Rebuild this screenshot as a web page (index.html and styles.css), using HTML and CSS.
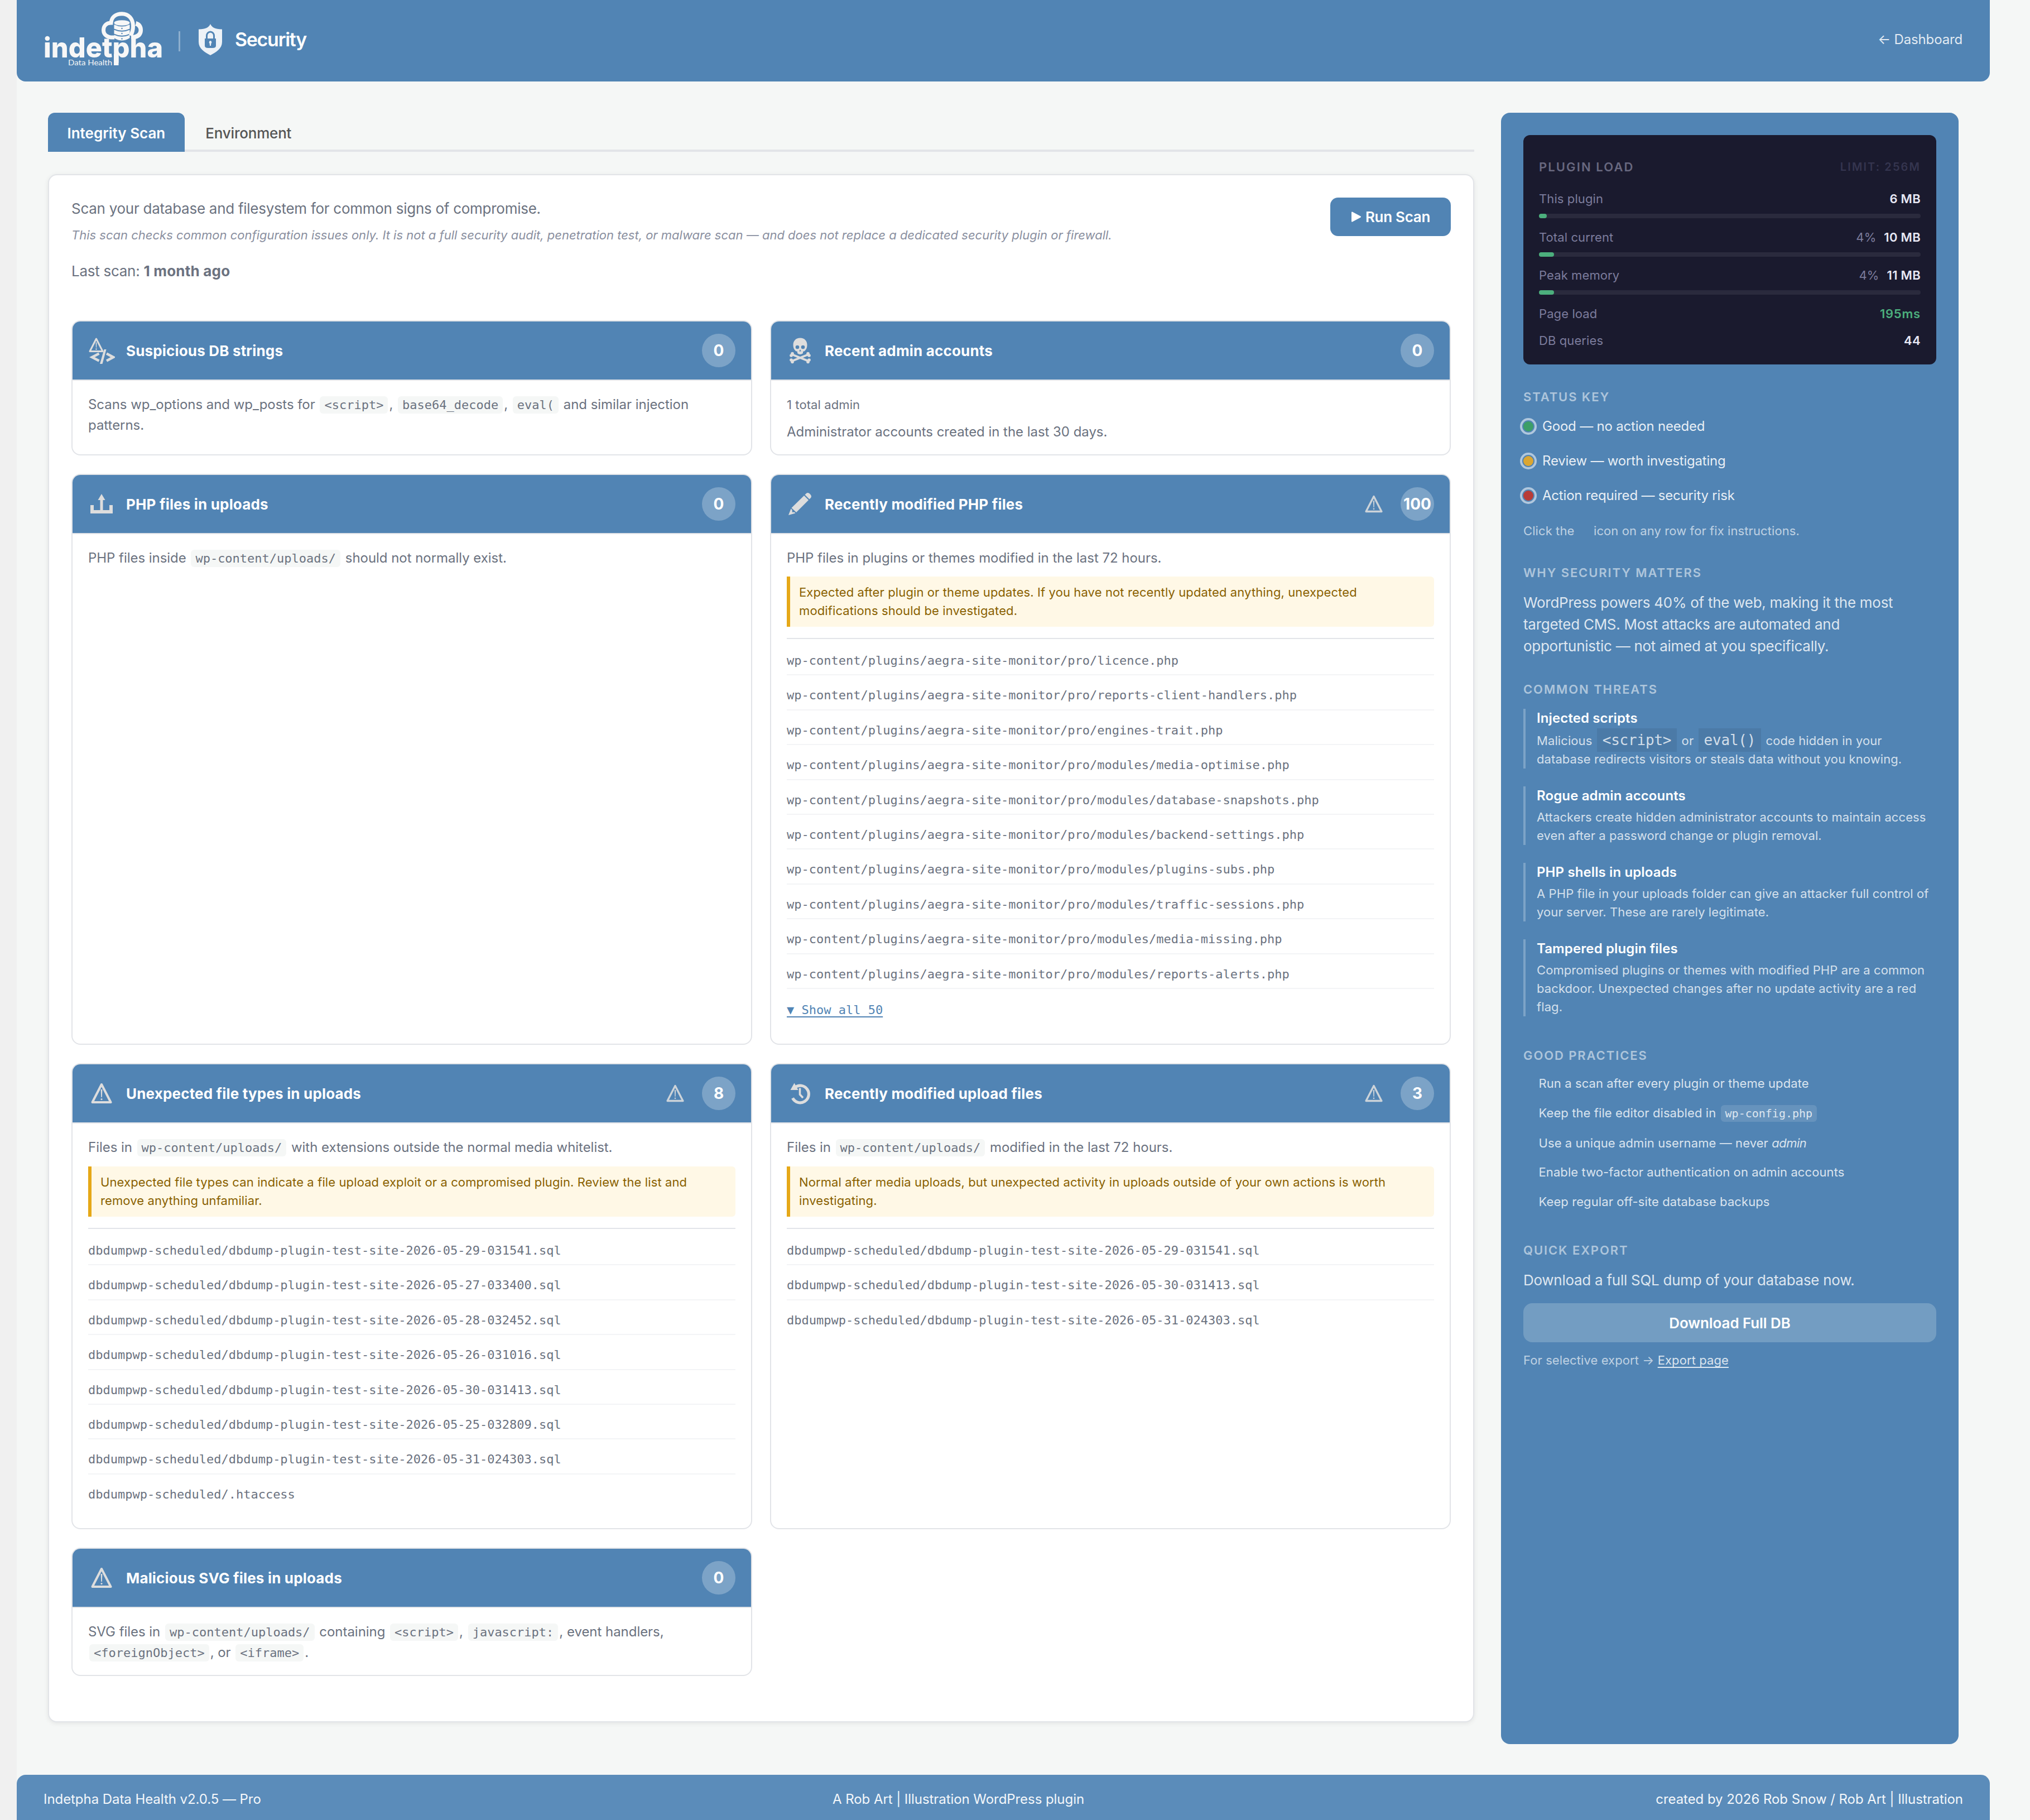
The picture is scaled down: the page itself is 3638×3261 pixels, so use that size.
FILE: index.html
```
<!DOCTYPE html>
<html lang="en">
<head>
  <meta charset="UTF-8" />
  <meta name="viewport" content="width=device-width, initial-scale=1.0"/>
  <title>Security - Indetpha Data Health</title>
  <link rel="stylesheet" href="styles.css">
</head>
<body>

<!-- shared icons -->
<svg class="sprite" width="0" height="0">
  <symbol id="icon-warning" viewBox="0 0 38 38">
    <path d="M19 3 L35.5 35 H2.5 Z" fill="none" stroke="currentColor" stroke-width="4" stroke-linejoin="round"/>
    <path d="M17.6 12 h2.8 l-.6 14 h-1.6 Z" fill="currentColor"/>
    <circle cx="19" cy="29.5" r="1.6" fill="currentColor"/>
  </symbol>
</svg>

<div class="wrap">
  <header class="topbar">
    <svg class="logo" width="216" height="100" viewBox="0 0 216 100">
      <!-- cloud -->
      <path d="M127 46 C114 47 107.500 41 107.500 33 C107.500 25 113 20 121 20 C122 9 130 3.800 140.500 3.800 C152 3.800 160.500 12 160.500 26 C160.500 34 159 38 156 43" fill="none" stroke="#f7f7f7" stroke-width="7"/>
      <path d="M166 17 C174 19 178 25 178 33 C178 42 172 49 162 49 H157 V42 C165 42 170.500 39 170.500 33 C170.500 29 168 26 164 25 C165.500 22 166 20 166 17 Z" fill="#f7f7f7"/>
      <!-- database -->
      <ellipse cx="140.500" cy="20" rx="14" ry="4.800" fill="#f7f7f7"/>
      <path d="M126.500 23 Q140.500 30 154.500 23 V30.500 Q140.500 37 126.500 30.500 Z M126.500 32.500 Q140.500 39 154.500 32.500 V39.500 Q140.500 46 126.500 39.500 Z M126.500 41.500 Q140.500 48 154.500 41.500 V47 Q140.500 56 126.500 47 Z" fill="#f7f7f7"/>
      <g fill="#5184b4"><circle cx="140.500" cy="30" r="1.200"/><circle cx="140.500" cy="39" r="1.200"/><circle cx="140.500" cy="48.500" r="1.200"/></g>
      <text class="logo-name" x="0" y="82" textLength="214" lengthAdjust="spacingAndGlyphs">indetpha</text>
      <rect x="126" y="76" width="8.500" height="20" fill="#f7f7f7"/>
      <text class="logo-sub" x="44" y="96" textLength="79" lengthAdjust="spacingAndGlyphs">Data Health</text>
    </svg>
    <span class="divider"></span>
    <svg class="shield" width="42" height="56" viewBox="0 0 42 56">
      <path d="M21 0 C24 6 29 9.500 42 9.500 V32 C42 44 32 50 21 56 C10 50 0 44 0 32 V9.500 C13 9.500 18 6 21 0 Z" fill="#edf2f7"/>
      <path d="M14.500 26 V21 a6.500 7 0 0 1 13 0 V26" fill="none" stroke="#5184b4" stroke-width="3"/>
      <path d="M11 26 H31 V39 Q31 43 25 43 H17 Q11 43 11 39 Z" fill="#5184b4"/>
      <path d="M21 30 a2.600 2.800 0 0 1 1.300 5 L22 39 H20 L19.700 35 A2.600 2.800 0 0 1 21 30 Z" fill="#edf2f7"/>
    </svg>
    <h1>Security</h1>
    <a class="back" href="#">← Dashboard</a>
  </header>

  <div class="layout">
    <main class="main">
      <nav class="tabs">
        <a class="tab active" href="#">Integrity Scan</a>
        <a class="tab" href="#">Environment</a>
      </nav>

      <section class="panel">
        <div class="intro">
          <div>
            <p class="lead">Scan your database and filesystem for common signs of compromise.</p>
            <p class="disclaimer">This scan checks common configuration issues only. It is not a full security audit, penetration test, or malware scan — and does not replace a dedicated security plugin or firewall.</p>
            <p class="last-scan">Last scan: <strong>1 month ago</strong></p>
          </div>
          <button class="run-btn" type="button">
            <svg width="19" height="19" viewBox="0 0 19 19"><path d="M2 1.500 L17 9.500 L2 17.500 Z" fill="#fff" stroke="#fff" stroke-width="2" stroke-linejoin="round"/></svg>
            Run Scan
          </button>
        </div>

        <div class="grid">
          <article class="card">
            <div class="card-head">
              <svg class="icon" viewBox="0 0 48 48">
                <path d="M14.500 3 L26 25.500 H3 Z" fill="none" stroke="currentColor" stroke-width="3" stroke-linejoin="round"/>
                <path d="M13.600 9.500 h1.800 l-.4 9.500 h-1 Z" fill="currentColor"/>
                <circle cx="14.500" cy="21.500" r="1.200" fill="currentColor"/>
                <path d="M19.500 29.500 L7 36 L19.500 42.500 M33 29.500 L45 36 L33 42.500" fill="none" stroke="currentColor" stroke-width="4.500"/>
                <path d="M28.500 22 L32.500 22 L25.500 48 L21 48 Z" fill="currentColor"/>
              </svg>
              <h2>Suspicious DB strings</h2>
              <span class="count">0</span>
            </div>
            <div class="card-body">
              <p>Scans wp_options and wp_posts for <code>&lt;script&gt;</code>, <code>base64_decode</code>, <code>eval(</code> and similar injection patterns.</p>
            </div>
          </article>

          <article class="card">
            <div class="card-head">
              <svg class="icon" viewBox="0 0 48 48">
                <path d="M24 1.500 C16 1.500 11.500 7 11.500 14 C11.500 18 12.500 22 16 25 L19 26 V29 Q24 33 29 29 V26 L32 25 C35.500 22 36.500 18 36.500 14 C36.500 7 32 1.500 24 1.500 Z" fill="currentColor"/>
                <circle cx="19" cy="18" r="3.300" fill="#5184b4"/>
                <circle cx="29" cy="18" r="3.300" fill="#5184b4"/>
                <path d="M24 22 l1.800 3.500 h-3.600 Z" fill="#5184b4"/>
                <path d="M9 31 L39 43 M39 31 L9 43" stroke="currentColor" stroke-width="3.600"/>
                <g fill="currentColor">
                  <circle cx="8" cy="33" r="2.800"/><circle cx="10" cy="29.500" r="2.800"/>
                  <circle cx="40" cy="33" r="2.800"/><circle cx="38" cy="29.500" r="2.800"/>
                  <circle cx="8" cy="41" r="2.800"/><circle cx="10" cy="44.500" r="2.800"/>
                  <circle cx="40" cy="41" r="2.800"/><circle cx="38" cy="44.500" r="2.800"/>
                </g>
              </svg>
              <h2>Recent admin accounts</h2>
              <span class="count">0</span>
            </div>
            <div class="card-body">
              <p class="meta">1 total admin</p>
              <p>Administrator accounts created in the last 30 days.</p>
            </div>
          </article>

          <article class="card">
            <div class="card-head">
              <svg class="icon" viewBox="0 0 48 48">
                <path d="M7 26 V38 H41 V26" fill="none" stroke="currentColor" stroke-width="6"/>
                <path d="M24 36 V14" stroke="currentColor" stroke-width="5"/>
                <path d="M24 6 L30.500 17 H17.500 Z" fill="currentColor"/>
              </svg>
              <h2>PHP files in uploads</h2>
              <span class="count">0</span>
            </div>
            <div class="card-body">
              <p>PHP files inside <code>wp-content/uploads/</code> should not normally exist.</p>
            </div>
          </article>

          <article class="card">
            <div class="card-head">
              <svg class="icon" viewBox="0 0 48 48">
                <path d="M8.500 31 L31 9 L39 17 L17 39 Z" fill="currentColor"/>
                <path d="M32.500 7.500 L35 5 Q38 2.500 41.500 6 Q45.500 10 43 13 L40.500 15.500 Z" fill="currentColor"/>
                <path d="M7.500 32.500 L3 44 L15.500 40.500 L13.500 38.500 L10 39 L9.500 34.500 Z" fill="currentColor"/>
              </svg>
              <h2>Recently modified PHP files</h2>
              <svg class="alert"><use href="#icon-warning"/></svg>
              <span class="count">100</span>
            </div>
            <div class="card-body">
              <p>PHP files in plugins or themes modified in the last 72 hours.</p>
              <p class="notice">Expected after plugin or theme updates. If you have not recently updated anything, unexpected modifications should be investigated.</p>
              <ul class="files">
                <li>wp-content/plugins/aegra-site-monitor/pro/licence.php</li>
                <li>wp-content/plugins/aegra-site-monitor/pro/reports-client-handlers.php</li>
                <li>wp-content/plugins/aegra-site-monitor/pro/engines-trait.php</li>
                <li>wp-content/plugins/aegra-site-monitor/pro/modules/media-optimise.php</li>
                <li>wp-content/plugins/aegra-site-monitor/pro/modules/database-snapshots.php</li>
                <li>wp-content/plugins/aegra-site-monitor/pro/modules/backend-settings.php</li>
                <li>wp-content/plugins/aegra-site-monitor/pro/modules/plugins-subs.php</li>
                <li>wp-content/plugins/aegra-site-monitor/pro/modules/traffic-sessions.php</li>
                <li>wp-content/plugins/aegra-site-monitor/pro/modules/media-missing.php</li>
                <li>wp-content/plugins/aegra-site-monitor/pro/modules/reports-alerts.php</li>
                <li class="more"><a href="#">▼ Show all 50</a></li>
              </ul>
            </div>
          </article>

          <article class="card">
            <div class="card-head">
              <svg class="icon pad"><use href="#icon-warning"/></svg>
              <h2>Unexpected file types in uploads</h2>
              <svg class="alert"><use href="#icon-warning"/></svg>
              <span class="count">8</span>
            </div>
            <div class="card-body">
              <p>Files in <code>wp-content/uploads/</code> with extensions outside the normal media whitelist.</p>
              <p class="notice">Unexpected file types can indicate a file upload exploit or a compromised plugin. Review the list and remove anything unfamiliar.</p>
              <ul class="files">
                <li>dbdumpwp-scheduled/dbdump-plugin-test-site-2026-05-29-031541.sql</li>
                <li>dbdumpwp-scheduled/dbdump-plugin-test-site-2026-05-27-033400.sql</li>
                <li>dbdumpwp-scheduled/dbdump-plugin-test-site-2026-05-28-032452.sql</li>
                <li>dbdumpwp-scheduled/dbdump-plugin-test-site-2026-05-26-031016.sql</li>
                <li>dbdumpwp-scheduled/dbdump-plugin-test-site-2026-05-30-031413.sql</li>
                <li>dbdumpwp-scheduled/dbdump-plugin-test-site-2026-05-25-032809.sql</li>
                <li>dbdumpwp-scheduled/dbdump-plugin-test-site-2026-05-31-024303.sql</li>
                <li>dbdumpwp-scheduled/.htaccess</li>
              </ul>
            </div>
          </article>

          <article class="card">
            <div class="card-head">
              <svg class="icon" viewBox="0 0 48 48">
                <path d="M14.500 13.500 A15.300 15.300 0 1 1 10.500 32.500" fill="none" stroke="currentColor" stroke-width="5.200"/>
                <path d="M6.500 18 L13.500 5.500 L20.500 18 Z" fill="currentColor"/>
                <path d="M23.500 14.500 V26 L29 32" fill="none" stroke="currentColor" stroke-width="3.600"/>
              </svg>
              <h2>Recently modified upload files</h2>
              <svg class="alert"><use href="#icon-warning"/></svg>
              <span class="count">3</span>
            </div>
            <div class="card-body">
              <p>Files in <code>wp-content/uploads/</code> modified in the last 72 hours.</p>
              <p class="notice">Normal after media uploads, but unexpected activity in uploads outside of your own actions is worth investigating.</p>
              <ul class="files">
                <li>dbdumpwp-scheduled/dbdump-plugin-test-site-2026-05-29-031541.sql</li>
                <li>dbdumpwp-scheduled/dbdump-plugin-test-site-2026-05-30-031413.sql</li>
                <li>dbdumpwp-scheduled/dbdump-plugin-test-site-2026-05-31-024303.sql</li>
              </ul>
            </div>
          </article>

          <article class="card">
            <div class="card-head">
              <svg class="icon pad"><use href="#icon-warning"/></svg>
              <h2>Malicious SVG files in uploads</h2>
              <span class="count">0</span>
            </div>
            <div class="card-body">
              <p>SVG files in <code>wp-content/uploads/</code> containing <code>&lt;script&gt;</code>, <code>javascript:</code>, event handlers, <code>&lt;foreignObject&gt;</code>, or <code>&lt;iframe&gt;</code>.</p>
            </div>
          </article>
        </div>
      </section>
    </main>

    <aside class="sidebar">
      <div class="load">
        <div class="load-head"><span>PLUGIN LOAD</span><span class="limit">LIMIT: 256M</span></div>
        <div class="load-row"><span>This plugin</span><b>6 MB</b></div>
        <div class="bar"><div class="fill" style="width: 2%"></div></div>
        <div class="load-row"><span>Total current</span><span>4%<b>10 MB</b></span></div>
        <div class="bar"><div class="fill" style="width: 4%"></div></div>
        <div class="load-row"><span>Peak memory</span><span>4%<b>11 MB</b></span></div>
        <div class="bar"><div class="fill" style="width: 4%"></div></div>
        <div class="load-row"><span>Page load</span><b class="ok">195ms</b></div>
        <div class="load-row last"><span>DB queries</span><b>44</b></div>
      </div>

      <h3>STATUS KEY</h3>
      <ul class="key">
        <li><i class="dot good"></i>Good — no action needed</li>
        <li><i class="dot review"></i>Review — worth investigating</li>
        <li><i class="dot risk"></i>Action required — security risk</li>
      </ul>
      <p class="hint">Click the <span class="hint-icon"></span> icon on any row for fix instructions.</p>

      <h3>WHY SECURITY MATTERS</h3>
      <p class="text">WordPress powers 40% of the web, making it the most targeted CMS. Most attacks are automated and opportunistic — not aimed at you specifically.</p>

      <h3>COMMON THREATS</h3>
      <div class="threats">
        <div class="threat">
          <strong>Injected scripts</strong>
          <p>Malicious <code>&lt;script&gt;</code> or <code>eval()</code> code hidden in your database redirects visitors or steals data without you knowing.</p>
        </div>
        <div class="threat">
          <strong>Rogue admin accounts</strong>
          <p>Attackers create hidden administrator accounts to maintain access even after a password change or plugin removal.</p>
        </div>
        <div class="threat">
          <strong>PHP shells in uploads</strong>
          <p>A PHP file in your uploads folder can give an attacker full control of your server. These are rarely legitimate.</p>
        </div>
        <div class="threat">
          <strong>Tampered plugin files</strong>
          <p>Compromised plugins or themes with modified PHP are a common backdoor. Unexpected changes after no update activity are a red flag.</p>
        </div>
      </div>

      <h3 class="wide">GOOD PRACTICES</h3>
      <ul class="practices">
        <li>Run a scan after every plugin or theme update</li>
        <li>Keep the file editor disabled in <code>wp-config.php</code></li>
        <li>Use a unique admin username — never <em>admin</em></li>
        <li>Enable two-factor authentication on admin accounts</li>
        <li>Keep regular off-site database backups</li>
      </ul>

      <h3 class="wide">QUICK EXPORT</h3>
      <p class="text">Download a full SQL dump of your database now.</p>
      <button class="export-btn" type="button">Download Full DB</button>
      <p class="export-note">For selective export → <a href="#">Export page</a></p>
    </aside>
  </div>

  <footer class="footer">
    <span>Indetpha Data Health v2.0.5 — Pro</span>
    <span>A Rob Art | Illustration WordPress plugin</span>
    <span>created by 2026 Rob Snow / Rob Art | Illustration</span>
  </footer>
</div>

</body>
</html>
```
FILE: styles.css
```
* {
  box-sizing: border-box;
}

body {
  margin: 0;
  background: #f0f0f0;
  font-family: Inter, "Liberation Sans", sans-serif;
  color: #6b7280;
}

h1, h2, h3, p, ul {
  margin: 0;
  padding: 0;
}

ul {
  list-style: none;
}

a {
  color: inherit;
}

code {
  font-family: "DejaVu Sans Mono", monospace;
}

.sprite {
  display: block;
}

.wrap {
  margin-left: 30px;
  height: 3261px;
  padding-right: 72px;
  background: #f5f7f6;
  display: flex;
  flex-direction: column;
}

/* top bar */
.topbar {
  height: 146px;
  padding: 0 49px 4px 48px;
  background: #5184b4;
  border-radius: 0 0 16px 16px;
  display: flex;
  align-items: center;
  color: #fff;
}

.logo {
  overflow: visible;
}

.logo-name {
  font-family: Inter, sans-serif;
  font-size: 50px;
  font-weight: 800;
  fill: #f7f7f7;
}

.logo-sub {
  font-family: Lato, sans-serif;
  font-size: 14px;
  fill: #f7f7f7;
}

.divider {
  width: 3px;
  height: 36px;
  margin: 5px 33px 0 26px;
  background: rgba(255, 255, 255, 0.35);
}

.topbar h1 {
  margin: 0 0 2px 23px;
  font-size: 34px;
  font-weight: 600;
  letter-spacing: -1.3px;
}

.back {
  margin: 0 0 1px auto;
  font-size: 24px;
  letter-spacing: -0.15px;
  color: rgba(255, 255, 255, 0.85);
  text-decoration: none;
}

/* page columns */
.layout {
  height: 2923px;
  margin: 56px 56px 0;
  display: flex;
  gap: 48px;
}

.main {
  width: 2556px;
  display: flex;
  flex-direction: column;
}

.tabs {
  height: 70px;
  display: flex;
  gap: 3px;
  border-bottom: 4px solid #e2e4e8;
}

.tab {
  height: 70px;
  padding: 0 34.5px;
  line-height: 74px;
  font-size: 26px;
  font-weight: 500;
  letter-spacing: -0.2px;
  color: #555;
  text-decoration: none;
}

.tab.active {
  background: #5184b4;
  border-radius: 12px 12px 0 0;
  font-weight: 600;
  letter-spacing: 0;
  color: #fff;
}

.panel {
  height: 2774px;
  margin-top: 40px;
  padding: 40px;
  background: #fff;
  border: 2px solid #e2e4e8;
  border-radius: 16px;
  box-shadow: 0 2px 8px rgba(0, 0, 0, 0.08);
}

.intro {
  height: 220px;
  display: flex;
  justify-content: space-between;
  align-items: flex-start;
}

.lead,
.last-scan {
  line-height: 40px;
  font-size: 26px;
  letter-spacing: -0.27px;
}

.last-scan strong {
  letter-spacing: 0.2px;
}

.disclaimer {
  margin: 11px 0 28px;
  line-height: 33px;
  font-size: 22px;
  font-style: italic;
  color: #8a8fa0;
}

.run-btn {
  width: 216px;
  height: 69px;
  display: flex;
  align-items: center;
  justify-content: center;
  gap: 7px;
  border: 0;
  border-radius: 14px;
  background: #5184b4;
  color: #fff;
  font-family: inherit;
  font-size: 26px;
  font-weight: 600;
  letter-spacing: -0.3px;
}

/* result cards */
.grid {
  display: grid;
  grid-template-columns: 1fr 1fr;
  grid-template-rows: 242px 1023px 835px 230px;
  gap: 33px 32px;
}

.card {
  border: 2px solid #e2e4e8;
  border-radius: 16px;
  overflow: hidden;
}

.card-head {
  height: 106px;
  padding: 0 28px;
  background: #5184b4;
  border-bottom: 2px solid #e2e4e8;
  display: flex;
  align-items: center;
  color: #fff;
}

.card-head h2 {
  margin: 0 auto 0 20px;
  font-size: 26px;
  font-weight: 700;
  letter-spacing: 0.17px;
}

.icon {
  width: 48px;
  height: 48px;
  color: #ddd;
}

.icon.pad {
  padding: 5px;
}

.alert {
  width: 32px;
  height: 32px;
  margin-right: 32px;
  color: #ccd3d9;
}

.count {
  width: 60px;
  height: 60px;
  border-radius: 50%;
  background: rgba(255, 255, 255, 0.25);
  line-height: 60px;
  text-align: center;
  font-size: 28px;
  font-weight: 700;
}

.card-body {
  padding: 25px 28px 24px;
}

.card-body p {
  line-height: 36px;
  font-size: 24px;
  letter-spacing: -0.04px;
}

.card-body code {
  margin: 0 2px;
  padding: 3px 8px;
  border-radius: 6px;
  background: #f5f7f6;
  font-size: 22px;
  letter-spacing: 0;
}

.card-body .meta {
  margin-bottom: 13px;
  font-size: 22px;
  letter-spacing: 0.1px;
}

.card-body .notice {
  margin: 15px 0 20px;
  padding: 12px 20px 12px 16px;
  border-left: 6px solid #e6a817;
  border-radius: 0 6px 6px 0;
  background: #fff8e6;
  line-height: 33px;
  font-size: 22px;
  letter-spacing: 0.11px;
  color: #8a6100;
}

.files {
  padding-top: 3px;
  border-top: 2px solid #e2e4e9;
  font-family: "DejaVu Sans Mono", monospace;
  font-size: 22px;
  line-height: 36px;
}

.files li {
  padding: 18px 0 6.4px;
  border-bottom: 2px solid #f3f4f6;
}

.files li:last-child {
  border-bottom: 0;
}

.files .more {
  padding-top: 20px;
  color: #5184b4;
}

.files .more a {
  text-underline-offset: 4px;
}

/* sidebar */
.sidebar {
  width: 820px;
  padding: 40px;
  background: #5184b4;
  border-radius: 16px;
  color: #fff;
}

.load {
  height: 411px;
  padding: 41px 28px 26px;
  border-radius: 12px;
  background: #1a1a2e;
  font-size: 22px;
  line-height: 33px;
  color: #7c7c9c;
}

.load-head {
  margin-bottom: 24px;
  display: flex;
  justify-content: space-between;
  font-weight: 600;
  letter-spacing: 2.1px;
  color: #68687f;
}

.load-head .limit {
  font-size: 20px;
  color: #35354f;
}

.load-row {
  display: flex;
  justify-content: space-between;
  letter-spacing: 0.1px;
}

.load-row b {
  margin-left: 14px;
  font-weight: 600;
  letter-spacing: 0.3px;
  color: #e8e8f5;
}

.load-row .ok {
  letter-spacing: 0.8px;
  color: #4caf7d;
}

.load-row.last {
  margin-top: 15px;
}

.bar {
  height: 8px;
  margin: 10px 0 17.6px;
  border-radius: 4px;
  background: #2a2a3d;
}

.fill {
  height: 8px;
  border-radius: 4px;
  background: #4caf7d;
}

.sidebar h3 {
  margin: 43px 0 19.5px;
  line-height: 30px;
  font-size: 22px;
  font-weight: 600;
  letter-spacing: 1.9px;
  color: rgba(255, 255, 255, 0.55);
}

.sidebar h3.wide {
  margin-top: 55px;
}

.key {
  display: flex;
  flex-direction: column;
  gap: 26.2px;
}

.key li {
  display: flex;
  align-items: center;
  gap: 10px;
  margin-left: -6px;
  line-height: 36px;
  font-size: 24px;
  letter-spacing: -0.2px;
  color: rgba(255, 255, 255, 0.88);
}

/* coloured centre with a separate light ring around it */
.dot {
  width: 30px;
  height: 30px;
  padding: 2px;
  border: 4px solid rgba(255, 255, 255, 0.55);
  border-radius: 50%;
  background-clip: content-box;
}

.good {
  background-color: #3d9e68;
}

.review {
  background-color: #dba632;
}

.risk {
  background-color: #b83c38;
}

.hint {
  margin-top: 29px;
  line-height: 33px;
  font-size: 22px;
  letter-spacing: 0.09px;
  color: rgba(255, 255, 255, 0.65);
}

.hint-icon {
  display: inline-block;
  width: 22px;
}

.text {
  padding-right: 40px;
  line-height: 39px;
  font-size: 26px;
  letter-spacing: -0.27px;
  color: rgba(255, 255, 255, 0.82);
}

.threats {
  display: flex;
  flex-direction: column;
  gap: 32px;
}

.threat {
  padding-left: 20px;
  border-left: 4px solid rgba(255, 255, 255, 0.25);
}

.threat strong {
  display: block;
  margin-bottom: 5px;
  line-height: 34px;
  font-size: 24px;
  font-weight: 600;
  letter-spacing: 0.12px;
}

.threat p {
  line-height: 33px;
  font-size: 22px;
  letter-spacing: 0.09px;
  color: rgba(255, 255, 255, 0.77);
}

.threat code {
  margin: 0 2px;
  padding: 6px 10px;
  background: rgba(0, 0, 0, 0.07);
  font-size: 26px;
  letter-spacing: -0.2px;
}

.threat:first-child p {
  padding-top: 1px;
}

.practices {
  padding-left: 27.5px;
  display: flex;
  flex-direction: column;
  gap: 19.6px;
  line-height: 33px;
  font-size: 22px;
  letter-spacing: 0.09px;
  color: rgba(255, 255, 255, 0.8);
}

.practices em {
  letter-spacing: -0.5px;
}

.practices code {
  margin: 0 2px;
  padding: 3px 8px;
  border-radius: 6px;
  background: rgba(255, 255, 255, 0.12);
  font-size: 20px;
  letter-spacing: 0;
}

.export-btn {
  display: block;
  width: 100%;
  height: 70px;
  margin: 22px 0 16px;
  border: 0;
  border-radius: 16px;
  background: #739dc2;
  color: #fff;
  font-family: inherit;
  font-size: 26px;
  font-weight: 600;
  letter-spacing: -0.1px;
}

.export-note {
  line-height: 33px;
  font-size: 22px;
  letter-spacing: 0.09px;
  color: rgba(255, 255, 255, 0.65);
}

.export-note a {
  color: rgba(255, 255, 255, 0.8);
  text-underline-offset: 4px;
}

/* footer */
.footer {
  height: 81px;
  margin-top: auto;
  padding: 5px 48px 0;
  display: flex;
  justify-content: space-between;
  align-items: center;
  border-radius: 16px 16px 0 0;
  background: #5b8cba;
  font-size: 24px;
  letter-spacing: -0.06px;
  color: #f4f7fa;
}
```
